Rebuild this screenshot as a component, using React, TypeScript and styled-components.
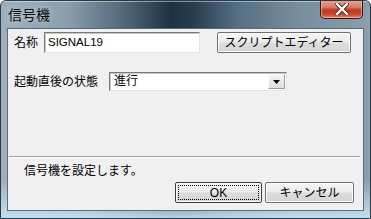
import styled, { createGlobalStyle } from 'styled-components';

const GlobalStyle = createGlobalStyle`
  html, body {
    margin: 0;
    padding: 0;
    background: #ffffff;
  }
  * {
    box-sizing: border-box;
  }
`

const uiFont = `"Liberation Sans", "Noto Sans CJK JP", sans-serif`;

const Window = styled.div`
  width: 371px;
  height: 219px;
  display: flex;
  flex-direction: column;
  border: 1px solid #2b3a45;
  border-radius: 6px 6px 0 0;
  overflow: hidden;
  background: linear-gradient(90deg, #9fb0bd 0%, #8a9eae 18%, #52697c 33%, #1c3244 46%, #263d50 52%, #566e82 64%, #768d9e 80%, #8b9eac 100%);
  font-family: ${uiFont};
`

const TitleBar = styled.div`
  height: 27px;
  display: flex;
  justify-content: space-between;
  align-items: flex-start;
  padding: 0 7px 0 7px;
  box-shadow: inset 0 1px 0 rgba(255, 255, 255, 0.45);
`

const TitleText = styled.div`
  margin-top: 6px;
  font-size: 14px;
  line-height: 16px;
  color: #0c0c0c;
  text-shadow: 0 0 6px rgba(255, 255, 255, 0.6);
`

const CloseButton = styled.div`
  width: 43px;
  height: 19px;
  margin-top: -1px;
  border: 1px solid #3c1308;
  border-top: none;
  border-radius: 0 0 5px 5px;
  background: linear-gradient(180deg, #e8a999 0%, #d77a66 40%, #c0391f 55%, #c94a2c 80%, #e0866a 100%);
  box-shadow: inset 0 0 0 1px rgba(255, 210, 200, 0.55);
  display: flex;
  align-items: center;
  justify-content: center;
`

const FrameBody = styled.div`
  flex: 1;
  display: flex;
  padding: 0 6px 7px 6px;
  background: linear-gradient(180deg, rgba(190, 215, 232, 0) 0%, rgba(190, 215, 232, 0) 80%, rgba(200, 230, 245, 0.9) 100%);
`

const Client = styled.div`
  flex: 1;
  background: #f0f0f0;
  border: 1px solid #5b6b78;
  display: flex;
  flex-direction: column;
  padding: 3px 0 0 0;
  font-size: 12px;
  color: #000;
`

const FieldRow = styled.div<{ $top: number }>`
  display: flex;
  align-items: center;
  margin-top: ${(p) => p.$top}px;
  padding-left: 6px;
  & > * {
    flex-shrink: 0;
  }
`

const Label = styled.span<{ $width: number }>`
  width: ${(p) => p.$width}px;
  font-size: 12px;
  line-height: 14px;
  white-space: nowrap;
`

const TextBox = styled.div`
  width: 156px;
  height: 21px;
  background: #ffffff;
  border-top: 1px solid #7a7a7a;
  border-left: 1px solid #7a7a7a;
  border-right: 1px solid #e3e3e3;
  border-bottom: 1px solid #e3e3e3;
  box-shadow: inset 1px 1px 0 #c8c8c8;
  padding: 2px 0 0 3px;
  font-size: 11.5px;
  line-height: 15px;
`

const PushButton = styled.div<{ $width: number; $gap?: number; $default?: boolean }>`
  width: ${(p) => p.$width}px;
  height: 21px;
  margin-left: ${(p) => p.$gap ?? 0}px;
  border: 1px solid ${(p) => (p.$default ? '#3c3c3c' : '#707070')};
  border-radius: 2px;
  background: linear-gradient(180deg, #f6f6f6 0%, #ebebeb 48%, #dddddd 52%, #d4d4d4 100%);
  box-shadow: inset 0 0 0 1px #fbfbfb;
  display: flex;
  align-items: center;
  justify-content: center;
  padding: 2px;
  font-size: 12px;
  line-height: 14px;
  white-space: nowrap;
`

const FocusRing = styled.div`
  flex: 1;
  align-self: stretch;
  border: 1px dotted #000;
  display: flex;
  align-items: center;
  justify-content: center;
`

const Combo = styled.div`
  width: 178px;
  height: 19px;
  display: flex;
  background: #ffffff;
  border-top: 1px solid #7a7a7a;
  border-left: 1px solid #7a7a7a;
  border-right: 1px solid #e3e3e3;
  border-bottom: 1px solid #e3e3e3;
  box-shadow: inset 1px 1px 0 #c8c8c8;
`

const ComboText = styled.div`
  flex: 1;
  padding: 1px 0 0 4px;
  line-height: 15px;
`

const ComboArrow = styled.div`
  width: 17px;
  margin: 1px 1px 1px 0;
  background: linear-gradient(180deg, #f4f4f4, #dcdcdc);
  border: 1px solid #9a9a9a;
  border-top-color: #ffffff;
  border-left-color: #ffffff;
  display: flex;
  align-items: center;
  justify-content: center;
`

const Spacer = styled.div`
  flex: 1;
`

const Separator = styled.div`
  height: 2px;
  margin: 0 3px 0 1px;
  border-top: 1px solid #a0a0a0;
  border-bottom: 1px solid #ffffff;
`

const StatusText = styled.div`
  padding: 6px 0 0 16px;
  font-size: 12px;
  line-height: 14px;
`

const ButtonRow = styled.div`
  display: flex;
  justify-content: flex-end;
  gap: 3px;
  padding: 4px 9px 7px 0;
`

export default function App() {
  return (
    <>
      <GlobalStyle />
      <Window>
        <TitleBar>
          <TitleText>信号機</TitleText>
          <CloseButton>
            <svg width="14" height="12" viewBox="0 0 14 12">
              <path d="M2 1 L12 11 M12 1 L2 11" stroke="#4a1a10" strokeWidth="4" strokeLinecap="square" />
              <path d="M2 1 L12 11 M12 1 L2 11" stroke="#ffffff" strokeWidth="2.4" strokeLinecap="square" />
            </svg>
          </CloseButton>
        </TitleBar>
        <FrameBody>
          <Client>
            <FieldRow $top={0}>
              <Label $width={30}>名称</Label>
              <TextBox>SIGNAL19</TextBox>
              <PushButton $width={134} $gap={17}>スクリプトエディター</PushButton>
            </FieldRow>
            <FieldRow $top={19}>
              <Label $width={95}>起動直後の状態</Label>
              <Combo>
                <ComboText>進行</ComboText>
                <ComboArrow>
                  <svg width="7" height="4" viewBox="0 0 7 4">
                    <path d="M0 0 H7 L3.5 4 Z" fill="#000" />
                  </svg>
                </ComboArrow>
              </Combo>
            </FieldRow>
            <Spacer />
            <Separator />
            <StatusText>信号機を設定します。</StatusText>
            <ButtonRow>
              <PushButton $width={87} $default>
                <FocusRing>OK</FocusRing>
              </PushButton>
              <PushButton $width={89}>キャンセル</PushButton>
            </ButtonRow>
          </Client>
        </FrameBody>
      </Window>
    </>
  )
}
